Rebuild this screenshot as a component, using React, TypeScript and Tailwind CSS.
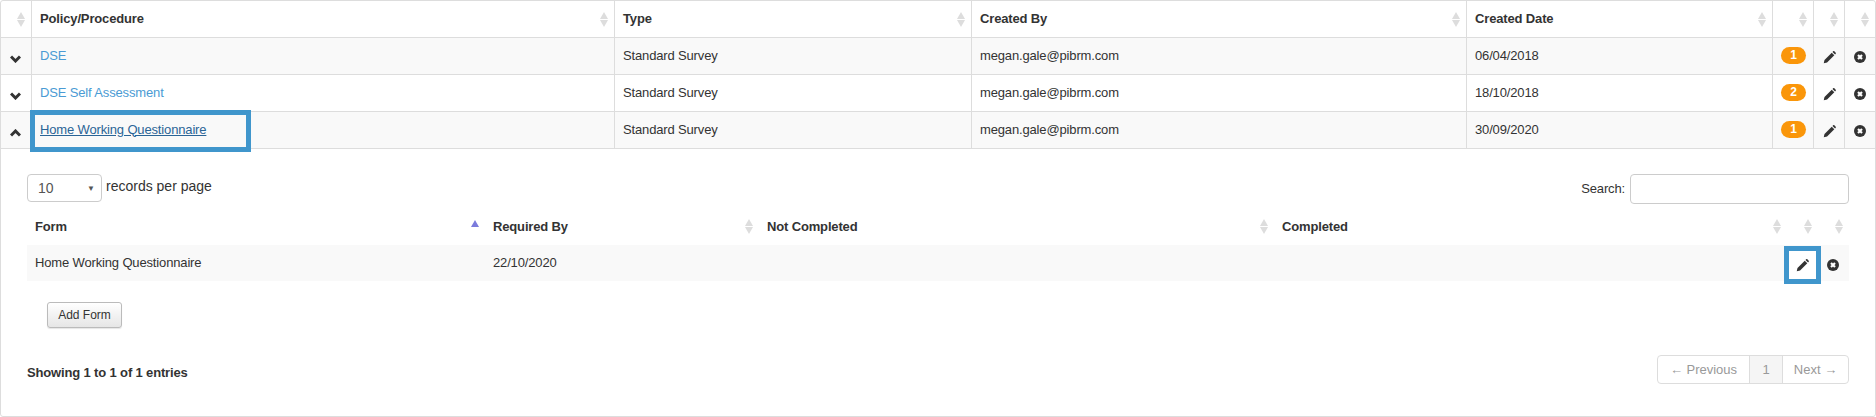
import React from "react";

const FONT = "font-['Liberation_Sans',Arial,sans-serif]";

function Sort({ low = false }: { low?: boolean }) {
  return (
    <svg width="8" height="15" viewBox="0 0 8 15" className={`absolute right-[6px] ${low ? "top-[15px]" : "top-[11px]"}`}>
      <path d="M4 0L8 7H0Z" fill="#dddddd" />
      <path d="M0 8H8L4 15Z" fill="#dddddd" />
    </svg>
  );
}

function Pencil() {
  return (
    <svg width="13" height="13" viewBox="0 0 14 14" className="inline-block">
      <path d="M0.8 13.2L1.6 9.6L9.4 1.8L12.2 4.6L4.4 12.4Z" fill="#333" />
      <path d="M10.2 1L11 0.3C11.4 0 11.9 0 12.2 0.3L13.7 1.8C14 2.1 14 2.6 13.7 3L13 3.8Z" fill="#333" />
    </svg>
  );
}

function Remove() {
  return (
    <svg width="12" height="12" viewBox="0 0 12 12" className="inline-block">
      <circle cx="6" cy="6" r="6" fill="#333" />
      <path d="M4 4L8 8M8 4L4 8" stroke="#fff" strokeWidth="2.2" />
    </svg>
  );
}

function Chevron({ up = false }: { up?: boolean }) {
  return (
    <svg width="11" height="8" viewBox="0 0 11 8" className="inline-block">
      <path d={up ? "M1 6.5L5.5 2L10 6.5" : "M1 1.5L5.5 6L10 1.5"} fill="none" stroke="#333" strokeWidth="3" />
    </svg>
  );
}

const rows = [
  { name: "DSE", date: "06/04/2018", n: 1 },
  { name: "DSE Self Assessment", date: "18/10/2018", n: 2 },
  { name: "Home Working Questionnaire", date: "30/09/2020", n: 1, open: true },
];

const th = "relative h-[37px] border-b border-l border-[#dddddd] px-2 pb-[2px] text-left font-bold first:border-l-0";
const td = "h-[37px] border-b border-l border-[#dddddd] px-2 pb-[2px] first:border-l-0";
const ith = "relative h-[41px] px-2 pt-[4px] text-left font-bold";
const itd = "h-[36px] px-2 pb-[2px]";

export default function App() {
  return (
    <div className={`${FONT} h-[417px] w-[1876px] bg-white text-[13px] leading-[17px] tracking-[-0.15px] text-[#333333]`}>
      <div className="h-[417px] w-[1876px] overflow-hidden rounded-[3px] border border-[#dddddd]">
        <table className="w-[1874px] table-fixed border-separate border-spacing-0">
          <colgroup>
            <col className="w-[30px]" />
            <col className="w-[583px]" />
            <col className="w-[357px]" />
            <col className="w-[495px]" />
            <col className="w-[306px]" />
            <col className="w-[41px]" />
            <col className="w-[31px]" />
            <col className="w-[31px]" />
          </colgroup>
          <thead>
            <tr>
              <th className={th}><Sort /></th>
              <th className={th}>Policy/Procedure<Sort /></th>
              <th className={th}>Type<Sort /></th>
              <th className={th}>Created By<Sort /></th>
              <th className={th}>Created Date<Sort /></th>
              <th className={th}><Sort /></th>
              <th className={th}><Sort /></th>
              <th className={th}><Sort /></th>
            </tr>
          </thead>
          <tbody>
            {rows.map((r, i) => (
              <tr key={r.name} className={i % 2 === 0 ? "bg-[#f9f9f9]" : "bg-white"}>
                <td className={`${td} !px-0 text-center`}><span className="relative top-[3px] -left-[1px]"><Chevron up={r.open} /></span></td>
                <td className={`${td} relative`}>
                  {r.open ? (
                    <>
                      <a href="#" className="text-[#2a6496] underline">{r.name}</a>
                      <div className="absolute left-[-2px] top-[-2px] h-[42px] w-[221px] border-[5px] border-[#4096cc]" />
                    </>
                  ) : (
                    <a href="#" className="text-[#4a9bd4]">{r.name}</a>
                  )}
                </td>
                <td className={td}>Standard Survey</td>
                <td className={td}>megan.gale@pibrm.com</td>
                <td className={td}>{r.date}</td>
                <td className={`${td} !px-0`}>
                  <span className="ml-[8px] flex h-[17px] w-[25px] items-center justify-center rounded-[9px] bg-[#fa960a] text-[12px] font-bold text-white">{r.n}</span>
                </td>
                <td className={`${td} !px-0 text-center`}><span className="relative top-[1px]"><Pencil /></span></td>
                <td className={`${td} !px-0 text-center`}><span className="relative top-[1px]"><Remove /></span></td>
              </tr>
            ))}
          </tbody>
        </table>

        <div className="mx-[26px] flex h-[267px] flex-col">
          <div className="mt-[25px] flex h-[30px] items-start justify-between">
            <div className="flex items-start gap-[4px]">
              <div className="relative flex h-[28px] w-[75px] items-center rounded-[4px] border border-[#cccccc] pl-[10px] text-[14px] tracking-normal text-[#555555]">
                10
                <span className="absolute right-[6px] top-[9px] text-[8px] leading-[10px] text-[#555555]">▼</span>
              </div>
              <span className="text-[14px] leading-[24px] tracking-normal">records per page</span>
            </div>
            <div className="flex items-center gap-[5px]">
              <span className="pb-[2px]">Search:</span>
              <div className="h-[30px] w-[219px] rounded-[4px] border border-[#cccccc] bg-white" />
            </div>
          </div>

          <table className="w-[1822px] table-fixed border-separate border-spacing-0">
            <colgroup>
              <col className="w-[458px]" />
              <col className="w-[274px]" />
              <col className="w-[515px]" />
              <col className="w-[513px]" />
              <col className="w-[31px]" />
              <col className="w-[31px]" />
            </colgroup>
            <thead>
              <tr>
                <th className={ith}>Form<svg width="8" height="7" viewBox="0 0 8 7" className="absolute right-[6px] top-[16px]"><path d="M4 0L8 7H0Z" fill="#7b7bdc" /></svg></th>
                <th className={ith}>Required By<Sort low /></th>
                <th className={ith}>Not Completed<Sort low /></th>
                <th className={ith}>Completed<Sort low /></th>
                <th className={ith}><Sort low /></th>
                <th className={ith}><Sort low /></th>
              </tr>
            </thead>
            <tbody>
              <tr className="bg-[#f9f9f9]">
                <td className={itd}>Home Working Questionnaire</td>
                <td className={itd}>22/10/2020</td>
                <td className={itd} />
                <td className={itd} />
                <td className="relative h-[36px] p-0">
                  <div className="absolute left-[-3px] top-[1px] flex h-[38px] w-[37px] items-center justify-center border-[5px] border-[#4096cc] bg-white"><Pencil /></div>
                </td>
                <td className="h-[36px] p-0 pl-[9px]"><span className="relative top-[1px]"><Remove /></span></td>
              </tr>
            </tbody>
          </table>

          <button className="ml-[20px] mt-[21px] h-[26px] w-[75px] rounded-[3px] border border-[#bbbbbb] bg-gradient-to-b from-white to-[#e6e6e6] text-center text-[12px] tracking-normal text-[#333333] shadow-[0_1px_1px_rgba(0,0,0,0.1)]">Add Form</button>

          <div className="mt-[27px] flex items-center justify-between">
            <span className="pt-[5px] font-bold">Showing 1 to 1 of 1 entries</span>
            <div className="flex h-[29px] rounded-[4px] border border-[#dddddd] tracking-normal text-[#999999]">
              <span className="flex w-[91px] items-center justify-center">← Previous</span>
              <span className="flex w-[34px] items-center justify-center border-x border-[#dddddd] bg-[#f5f5f5]">1</span>
              <span className="flex w-[65px] items-center justify-center">Next →</span>
            </div>
          </div>
        </div>
      </div>
    </div>
  );
}
